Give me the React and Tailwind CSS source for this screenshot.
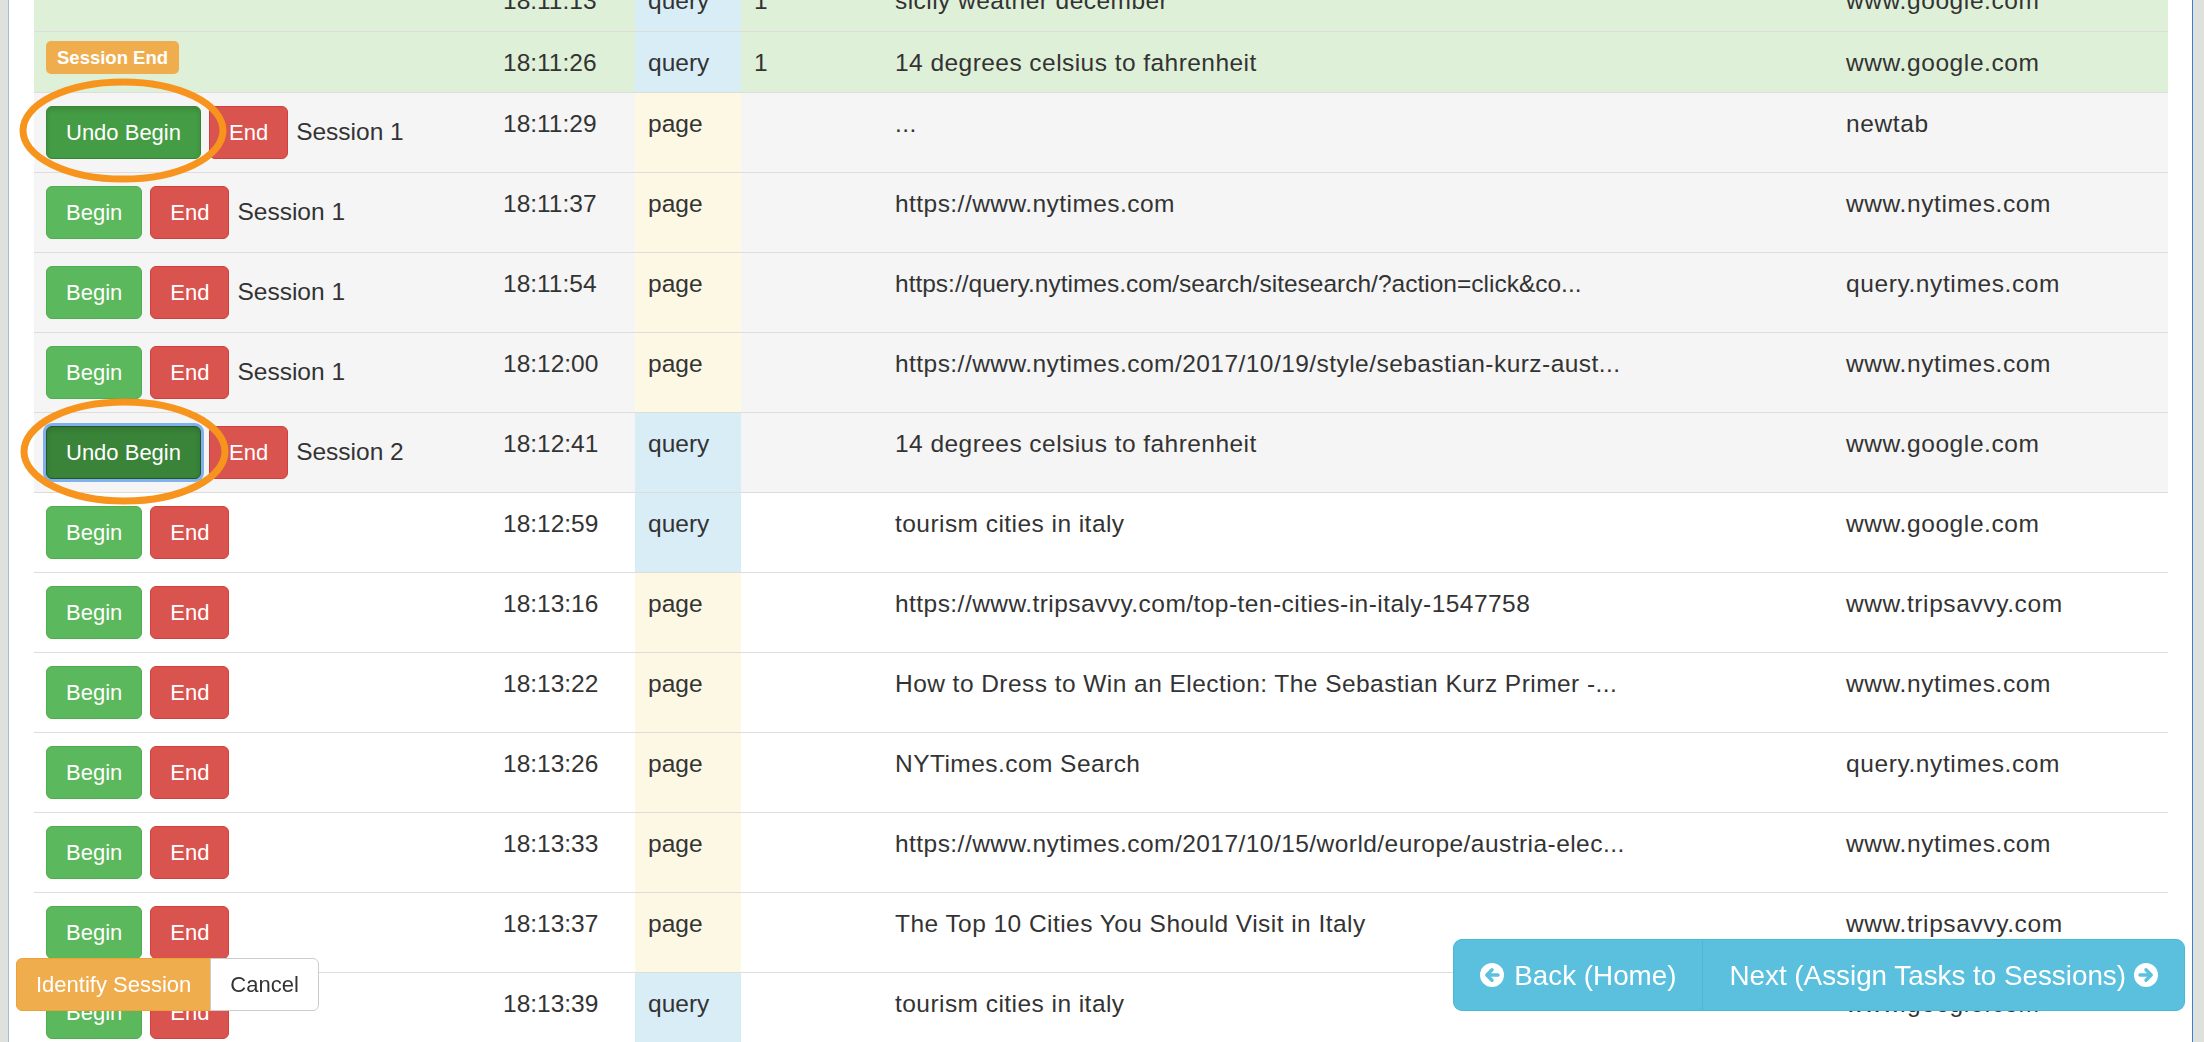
import React from 'react';

const rows = [
  { h: 'h-[62px]', tone: 'green', time: '18:11:13', type: 'query', num: '1', title: 'sicily weather december', domain: 'www.google.com' },
  { h: 'h-[61px]', tone: 'green', label: 'Session End', time: '18:11:26', type: 'query', num: '1', title: '14 degrees celsius to fahrenheit', domain: 'www.google.com' },
  { tone: 'gray', begin: 'undo', session: 'Session 1', time: '18:11:29', type: 'page', title: '...', domain: 'newtab' },
  { tone: 'gray', begin: 'begin', session: 'Session 1', time: '18:11:37', type: 'page', title: 'https://www.nytimes.com', domain: 'www.nytimes.com' },
  { tone: 'gray', begin: 'begin', session: 'Session 1', time: '18:11:54', type: 'page', title: 'https://query.nytimes.com/search/sitesearch/?action=click&co...', domain: 'query.nytimes.com', tight: true },
  { tone: 'gray', begin: 'begin', session: 'Session 1', time: '18:12:00', type: 'page', title: 'https://www.nytimes.com/2017/10/19/style/sebastian-kurz-aust...', domain: 'www.nytimes.com' },
  { tone: 'gray', begin: 'focus', session: 'Session 2', time: '18:12:41', type: 'query', title: '14 degrees celsius to fahrenheit', domain: 'www.google.com' },
  { tone: 'white', begin: 'begin', time: '18:12:59', type: 'query', title: 'tourism cities in italy', domain: 'www.google.com' },
  { tone: 'white', begin: 'begin', time: '18:13:16', type: 'page', title: 'https://www.tripsavvy.com/top-ten-cities-in-italy-1547758', domain: 'www.tripsavvy.com' },
  { tone: 'white', begin: 'begin', time: '18:13:22', type: 'page', title: 'How to Dress to Win an Election: The Sebastian Kurz Primer -...', domain: 'www.nytimes.com' },
  { tone: 'white', begin: 'begin', time: '18:13:26', type: 'page', title: 'NYTimes.com Search', domain: 'query.nytimes.com' },
  { tone: 'white', begin: 'begin', time: '18:13:33', type: 'page', title: 'https://www.nytimes.com/2017/10/15/world/europe/austria-elec...', domain: 'www.nytimes.com' },
  { tone: 'white', begin: 'begin', time: '18:13:37', type: 'page', title: 'The Top 10 Cities You Should Visit in Italy', domain: 'www.tripsavvy.com' },
  { tone: 'white', begin: 'begin', time: '18:13:39', type: 'query', title: 'tourism cities in italy', domain: 'www.google.com' },
];

const toneBg = { green: 'bg-[#dff0d8]', gray: 'bg-[#f5f5f5]', white: 'bg-white' };
const typeBg = { query: 'bg-[#d9edf7]', page: 'bg-[#fcf8e3]' };

const btn = 'inline-flex items-center h-[53px] px-[19px] rounded-[6px] border text-[22px] leading-[31px] text-white';

function BeginButton({ kind }) {
  if (kind === 'undo') {
    return (
      <button className={`${btn} bg-[#449d44] border-[#398439] shadow-[inset_0_3px_5px_rgba(0,0,0,0.125)]`}>Undo Begin</button>
    );
  }
  if (kind === 'focus') {
    return (
      <button className={`${btn} bg-[#398439] border-[#255625] shadow-[inset_0_3px_5px_rgba(0,0,0,0.125),0_0_0_3px_rgba(100,160,235,0.8)]`}>Undo Begin</button>
    );
  }
  return <button className={`${btn} bg-[#5cb85c] border-[#4cae4c]`}>Begin</button>;
}

function CircleArrow({ dir }) {
  return (
    <svg width="24" height="24" viewBox="0 0 24 24" className="shrink-0">
      <circle cx="12" cy="12" r="12" fill="#fff" />
      <g
        transform={dir === 'right' ? 'rotate(180 12 12)' : undefined}
        stroke="#5bc0de"
        strokeWidth="3.4"
        strokeLinecap="round"
        strokeLinejoin="round"
        fill="none"
      >
        <path d="M18 12H7.5" />
        <path d="M12 6.8L6.8 12L12 17.2" />
      </g>
    </svg>
  );
}

function Ring({ className }) {
  return (
    <svg className={`absolute ${className}`} viewBox="0 0 208 106" preserveAspectRatio="none">
      <ellipse cx="104" cy="53" rx="100" ry="49" fill="none" stroke="#f7941e" strokeWidth="7" />
    </svg>
  );
}

export default function App() {
  return (
    <div className="relative flex h-screen overflow-hidden bg-[#dfe1dc] font-['Liberation_Sans',Arial,sans-serif] text-[#333]">
      <div className="w-[8px] shrink-0"></div>

      <main className="flex-1 bg-white border-l border-r border-l-[#a9bcd6] border-r-[#3f7fd4] pl-[25px] pr-[24px]">
        <div className="-mt-[31px] w-[2134px]">
          {rows.map((r, i) => (
            <div
              key={i}
              className={`grid grid-cols-[456px_145px_106px_141px_951px_335px] border-t border-[#ddd] ${r.h || 'h-[80px]'} ${toneBg[r.tone]} text-[24.5px] leading-[35px]`}
            >
              {r.label ? (
                <div className="pl-[12px] pt-[6px]">
                  <span className="inline-flex items-center h-[33px] px-[11px] rounded-[5px] bg-[#f0ad4e] text-white font-bold text-[18.5px]">
                    {r.label}
                  </span>
                </div>
              ) : r.begin ? (
                <div className="pl-[12px] pt-[13px] flex items-baseline gap-2">
                  <BeginButton kind={r.begin} />
                  <button className={`${btn} bg-[#d9534f] border-[#d43f3a]`}>End</button>
                  {r.session && <span className="whitespace-nowrap">{r.session}</span>}
                </div>
              ) : (
                <div></div>
              )}
              <div className="px-[13px] pt-[13px]">{r.time}</div>
              <div className={`px-[13px] pt-[13px] ${typeBg[r.type]}`}>{r.type}</div>
              <div className="px-[13px] pt-[13px]">{r.num}</div>
              <div className={`px-[13px] pt-[13px] whitespace-nowrap overflow-hidden ${r.tight ? '' : 'tracking-[0.45px]'}`}>{r.title}</div>
              <div className="px-[13px] pt-[13px] whitespace-nowrap tracking-[0.6px]">{r.domain}</div>
            </div>
          ))}
        </div>
      </main>

      <div className="w-[11px] shrink-0"></div>

      {/* annotation rings */}
      <Ring className="left-[19px] top-[78px] w-[208px] h-[105px]" />
      <Ring className="left-[20px] top-[398px] w-[209px] h-[107px]" />

      {/* identify session group */}
      <div className="fixed left-[16px] bottom-[31px] flex">
        <button className="h-[53px] px-[19px] rounded-l-[6px] border border-[#eea236] bg-[#f0ad4e] text-white text-[22px] leading-[31px]">
          Identify Session
        </button>
        <button className="-ml-px h-[53px] px-[19px] rounded-r-[6px] border border-[#ccc] bg-white text-[#333] text-[22px] leading-[31px]">
          Cancel
        </button>
      </div>

      {/* navigation group */}
      <div className="fixed right-[19px] bottom-[31px] flex">
        <button className="flex items-center gap-[10px] h-[72px] px-[26px] rounded-l-[9px] border border-[#46b8da] bg-[#5bc0de] text-white text-[27.8px] leading-[37px]">
          <CircleArrow dir="left" />
          <span>Back (Home)</span>
        </button>
        <button className="-ml-px flex items-center gap-[8px] h-[72px] px-[26px] rounded-r-[9px] border border-[#46b8da] bg-[#5bc0de] text-white text-[27.8px] leading-[37px]">
          <span>Next (Assign Tasks to Sessions)</span>
          <CircleArrow dir="right" />
        </button>
      </div>
    </div>
  );
}
